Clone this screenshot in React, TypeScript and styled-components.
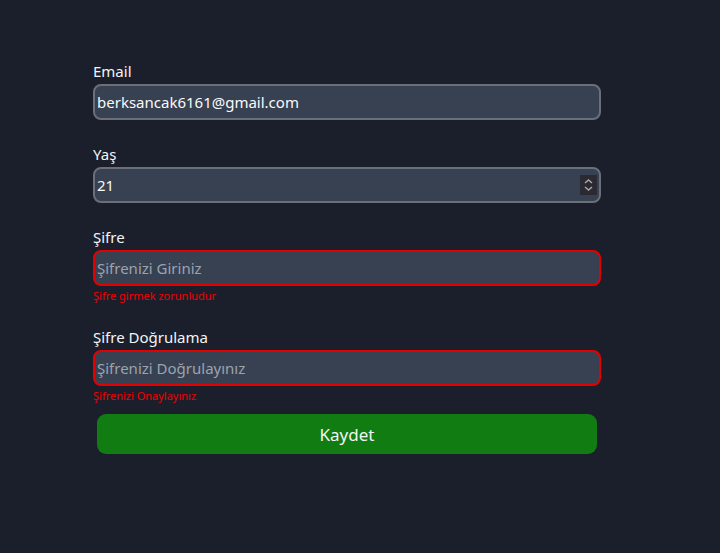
import { FC } from 'react'
import styled, { createGlobalStyle } from 'styled-components'

const GlobalStyle = createGlobalStyle`
    html, body {
        margin: 0;
        padding: 0;
        background-color: #1b1f2b;
        font-family: "Noto Sans", "Open Sans", sans-serif;
    }
`

const Page = styled.div`
    min-height: 553px;
    padding: 61px 0 0 93px;
    box-sizing: border-box;
`

const Form = styled.form`
    width: 508px;
    display: flex;
    flex-direction: column;
`

const Field = styled.div<{ $spaced: boolean }>`
    display: flex;
    flex-direction: column;
    margin-bottom: ${({ $spaced }) => ($spaced ? '24px' : '0')};
`

const Label = styled.label`
    color: #f3f4f6;
    font-size: 15px;
    line-height: 20px;
    margin-bottom: 3px;
`

const InputWrap = styled.div`
    position: relative;
`

const Input = styled.input<{ $error?: boolean }>`
    width: 100%;
    height: 36px;
    box-sizing: border-box;
    padding: 0 2px;
    border-radius: 8px;
    border: 2px solid ${({ $error }) => ($error ? '#e50000' : '#6b6f78')};
    background-color: #374151;
    color: #f9fafb;
    font-family: inherit;
    font-size: 15px;
    outline: none;
    appearance: textfield;

    &::placeholder {
        color: #9ca3af;
    }

    &::-webkit-inner-spin-button,
    &::-webkit-outer-spin-button {
        -webkit-appearance: none;
        margin: 0;
    }
`

const Spinner = styled.div`
    position: absolute;
    right: 4px;
    top: 8px;
    width: 17px;
    height: 20px;
    background-color: #2b2a33;
    display: flex;
    align-items: center;
    justify-content: center;
`

const ErrorText = styled.span`
    color: #f00000;
    font-size: 11px;
    line-height: 14px;
    margin-top: 3px;
`

const SubmitButton = styled.button`
    margin: 11px 4px 0;
    height: 40px;
    border: none;
    border-radius: 9px;
    background-color: #117c12;
    color: #f3f4f6;
    font-family: inherit;
    font-size: 17px;
    cursor: pointer;
`

const App: FC = () => {
    return (
        <Page>
            <GlobalStyle />
            <Form onSubmit={e => e.preventDefault()}>
                <Field $spaced>
                    <Label>Email</Label>
                    <Input type="email" defaultValue="berksancak6161@gmail.com" />
                </Field>
                <Field $spaced>
                    <Label>Yaş</Label>
                    <InputWrap>
                        <Input type="number" defaultValue={21} />
                        <Spinner>
                            <svg width="11" height="14" viewBox="0 0 11 14" fill="none" stroke="#a8a8b0" strokeWidth="1.4">
                                <path d="M2 5 L5.5 2 L9 5" />
                                <path d="M2 9 L5.5 12 L9 9" />
                            </svg>
                        </Spinner>
                    </InputWrap>
                </Field>
                <Field $spaced>
                    <Label>Şifre</Label>
                    <Input $error type="password" placeholder="Şifrenizi Giriniz" />
                    <ErrorText>Şifre girmek zorunludur</ErrorText>
                </Field>
                <Field $spaced={false}>
                    <Label>Şifre Doğrulama</Label>
                    <Input $error type="password" placeholder="Şifrenizi Doğrulayınız" />
                    <ErrorText>Şifrenizi Onaylayınız</ErrorText>
                </Field>
                <SubmitButton type="submit">Kaydet</SubmitButton>
            </Form>
        </Page>
    )
}

export default App
